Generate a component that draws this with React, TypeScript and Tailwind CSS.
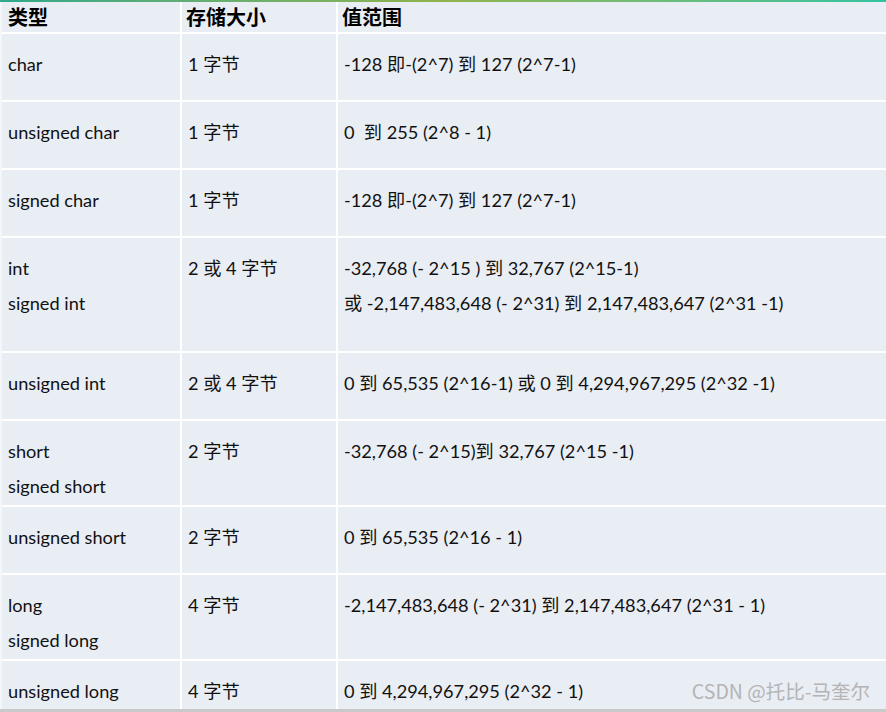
const rows: { type: string[]; size: string; range: string[]; h: string }[] = [
  { type: ['char'], size: '1 字节', range: ['-128 即-(2^7) 到 127 (2^7-1)'], h: 'h-[66px]' },
  { type: ['unsigned char'], size: '1 字节', range: ['0  到 255 (2^8 - 1)'], h: 'h-[66px]' },
  { type: ['signed char'], size: '1 字节', range: ['-128 即-(2^7) 到 127 (2^7-1)'], h: 'h-[66px]' },
  {
    type: ['int', 'signed int'],
    size: '2 或 4 字节',
    range: ['-32,768 (- 2^15 ) 到 32,767 (2^15-1)', '或 -2,147,483,648 (- 2^31) 到 2,147,483,647 (2^31 -1)'],
    h: 'h-[113px]',
  },
  { type: ['unsigned int'], size: '2 或 4 字节', range: ['0 到 65,535 (2^16-1) 或 0 到 4,294,967,295 (2^32 -1)'], h: 'h-[66px]' },
  { type: ['short', 'signed short'], size: '2 字节', range: ['-32,768 (- 2^15)到 32,767 (2^15 -1)'], h: 'h-[84px]' },
  { type: ['unsigned short'], size: '2 字节', range: ['0 到 65,535 (2^16 - 1)'], h: 'h-[66px]' },
  { type: ['long', 'signed long'], size: '4 字节', range: ['-2,147,483,648 (- 2^31) 到 2,147,483,647 (2^31 - 1)'], h: 'h-[84px]' },
  { type: ['unsigned long'], size: '4 字节', range: ['0 到 4,294,967,295 (2^32 - 1)'], h: 'h-[48px]' },
];

const body = "font-['Lato','Noto_Sans_CJK_SC',sans-serif]";

function Cell({ lines, h }: { lines: string[]; h: string }) {
  return (
    <div className={`${h} bg-[#e9edf4] pl-[6px] pt-[13px] text-[18.2px] leading-[35px] text-[#111] overflow-hidden`}>
      {lines.map((l, i) => (
        <div key={i} className="whitespace-pre">
          {l}
        </div>
      ))}
    </div>
  );
}

export default function App() {
  return (
    <div className={`relative w-[886px] h-[712px] overflow-hidden bg-white ${body}`}>
      {/* top edge strip */}
      <div className="h-[2px] bg-gradient-to-r from-[#2ea88a] via-[#8fb34a] to-[#2ec3a0]" />
      <div className="flex">
        <div className="w-[2px] bg-[#f4f6f8]" />
        <div className="flex-1 grid grid-cols-[178px_154px_1fr] gap-[2px] bg-white">
          <div className="h-[30px] bg-[#e9edf4] pl-[6px] flex items-center text-[20px] font-bold text-black font-['Noto_Sans_CJK_SC',sans-serif]">
            类型
          </div>
          <div className="h-[30px] bg-[#e9edf4] pl-[4px] flex items-center text-[20px] font-bold text-black font-['Noto_Sans_CJK_SC',sans-serif]">
            存储大小
          </div>
          <div className="h-[30px] bg-[#e9edf4] pl-[4px] flex items-center text-[20px] font-bold text-black font-['Noto_Sans_CJK_SC',sans-serif]">
            值范围
          </div>
          {rows.map((r, i) => (
            <div key={i} className="contents">
              <Cell lines={r.type} h={r.h} />
              <Cell lines={[r.size]} h={r.h} />
              <Cell lines={r.range} h={r.h} />
            </div>
          ))}
        </div>
      </div>
      {/* bottom edge */}
      <div className="h-[4px] bg-[#c9c9c9]" />
      <div className="absolute right-[16px] bottom-[7px] text-[19.5px] text-[#b4b4b4] font-['Noto_Sans_CJK_SC',sans-serif]">
        CSDN @托比-马奎尔
      </div>
    </div>
  );
}
